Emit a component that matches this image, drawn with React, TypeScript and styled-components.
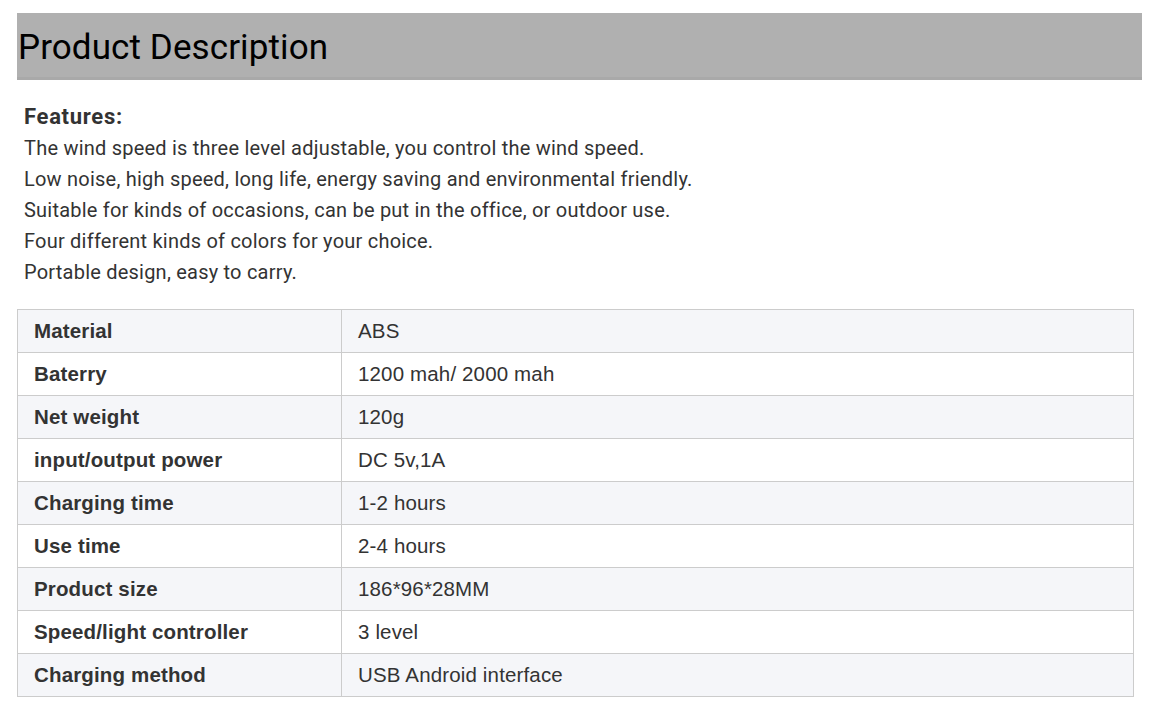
import React from "react";
import styled, { createGlobalStyle } from "styled-components";

const Global = createGlobalStyle`
  html, body { margin: 0; padding: 0; background: #fff; }
  body { font-family: Roboto, "Liberation Sans", sans-serif; }
`;

const Page = styled.div`
  padding: 13px 12px 0 17px;
  width: 1154px;
  box-sizing: border-box;
`;

const TitleBar = styled.div`
  width: 1125px;
  height: 64px;
  background: #b0b0b0;
  border-bottom: 3px solid #a9a9a9;
  display: flex;
  align-items: center;
  box-sizing: content-box;
`;

const Title = styled.h1`
  margin: 5px 0 0 1px;
  font-family: Roboto, sans-serif;
  font-weight: 400;
  font-size: 35px;
  letter-spacing: 0.1px;
  color: #000;
  line-height: 1;
`;

const Features = styled.div`
  padding: 23px 0 0 7px;
  color: #333;
`;

const FeatHead = styled.div`
  font-family: Roboto, sans-serif;
  font-weight: 700;
  font-size: 22px;
  letter-spacing: 0.7px;
  line-height: 28px;
  margin-bottom: 2px;
`;

const FeatLine = styled.div`
  font-family: Roboto, sans-serif;
  font-size: 20px;
  letter-spacing: 0.22px;
  line-height: 31px;
`;

const Table = styled.table`
  margin-top: 21px;
  width: 1117px;
  border-collapse: collapse;
  font-family: "Liberation Sans", Arial, sans-serif;
  font-size: 20.5px;
  letter-spacing: 0.15px;
  color: #333;
`;

const Row = styled.tr<{ $odd: boolean }>`
  background: ${(p) => (p.$odd ? "#f5f6f9" : "#ffffff")};
  height: 43px;
`;

const Label = styled.td`
  width: 291px;
  border: 1px solid #cccccc;
  padding: 0 16px;
  font-weight: 700;
`;

const Value = styled.td`
  border: 1px solid #cccccc;
  padding: 0 16px;
`;

const features = [
  "The wind speed is three level adjustable, you control the wind speed.",
  "Low noise, high speed, long life, energy saving and environmental friendly.",
  "Suitable for kinds of occasions, can be put in the office, or outdoor use.",
  "Four different kinds of colors for your choice.",
  "Portable design, easy to carry.",
];

const specs: [string, string][] = [
  ["Material", "ABS"],
  ["Baterry", "1200 mah/ 2000 mah"],
  ["Net weight", "120g"],
  ["input/output power", "DC 5v,1A"],
  ["Charging time", "1-2 hours"],
  ["Use time", "2-4 hours"],
  ["Product size", "186*96*28MM"],
  ["Speed/light controller", "3 level"],
  ["Charging method", "USB Android interface"],
];

export default function App() {
  return (
    <>
      <Global />
      <Page>
        <TitleBar>
          <Title>Product Description</Title>
        </TitleBar>
        <Features>
          <FeatHead>Features:</FeatHead>
          {features.map((f) => (
            <FeatLine key={f}>{f}</FeatLine>
          ))}
        </Features>
        <Table>
          <tbody>
            {specs.map(([k, v], i) => (
              <Row key={k} $odd={i % 2 === 0}>
                <Label>{k}</Label>
                <Value>{v}</Value>
              </Row>
            ))}
          </tbody>
        </Table>
      </Page>
    </>
  );
}
